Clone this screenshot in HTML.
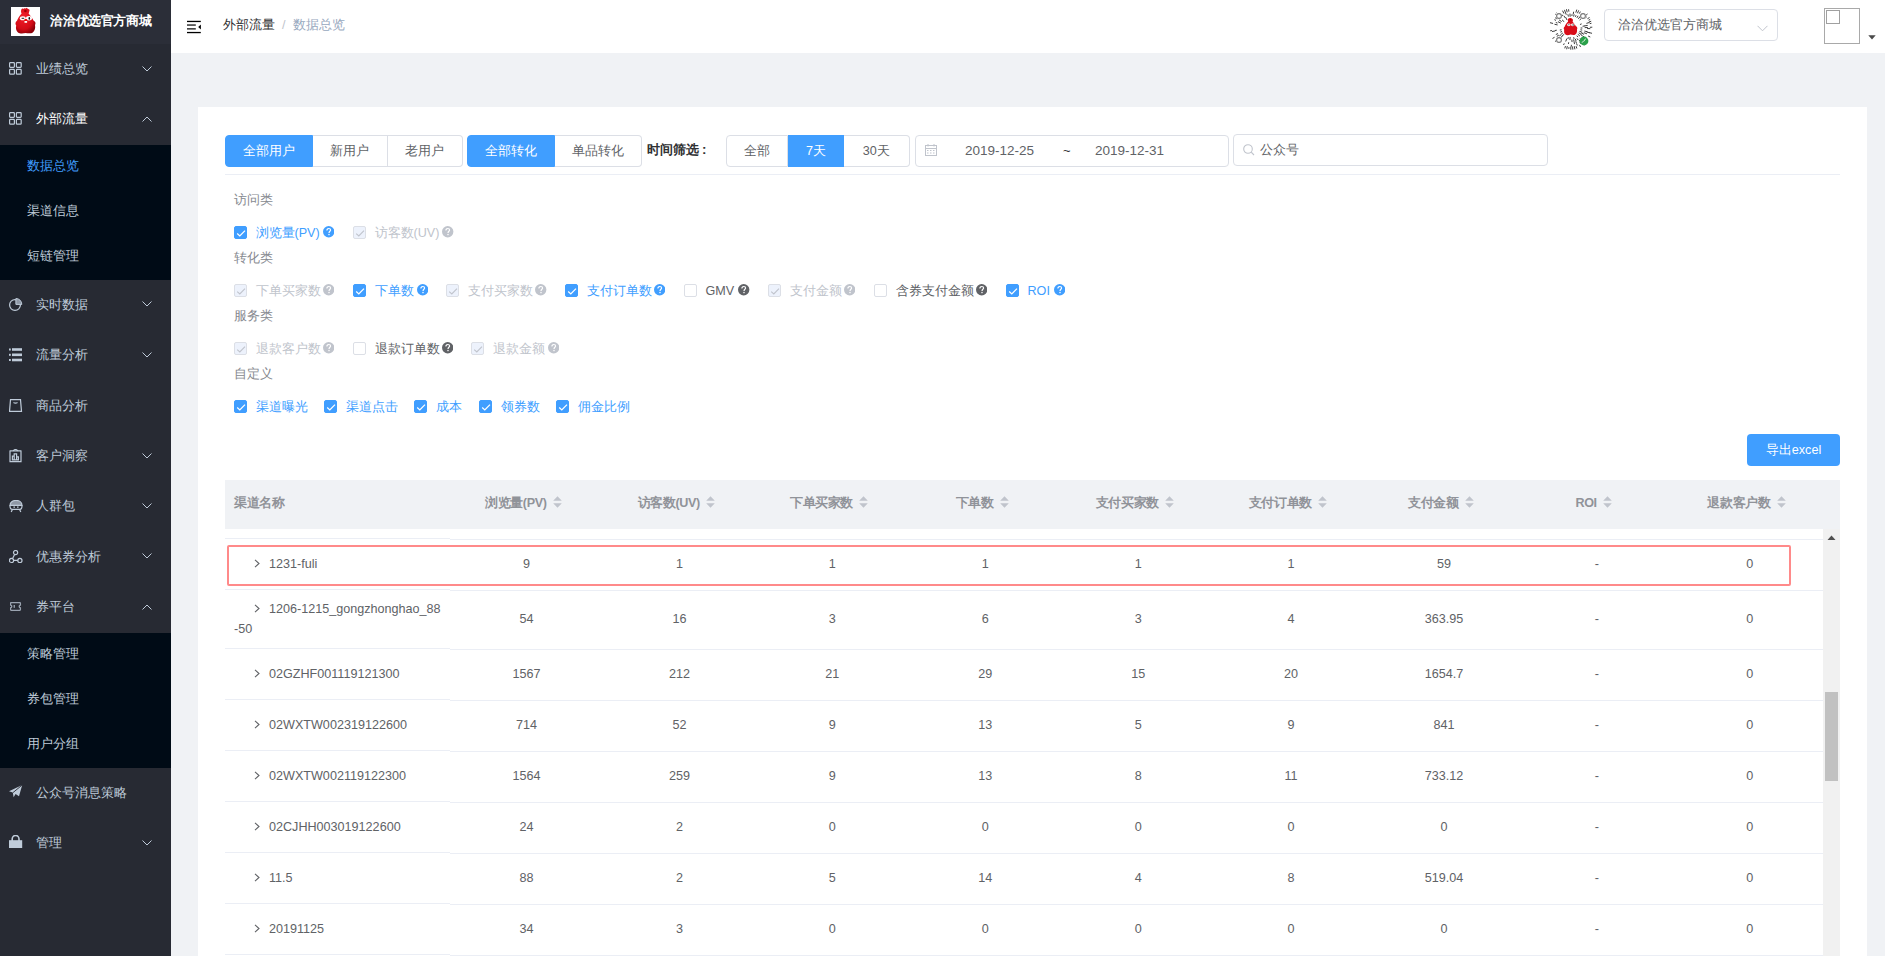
<!DOCTYPE html>
<html><head><meta charset="utf-8"><style>
*{box-sizing:border-box;margin:0;padding:0}
html,body{width:1885px;height:956px;overflow:hidden;background:#f0f2f5;font-family:"Liberation Sans",sans-serif;color:#606266;position:relative}
.a{position:absolute;white-space:nowrap}
#side{position:absolute;left:0;top:0;width:171px;height:956px;background:#272a33}
#logo{position:absolute;left:0;top:0;width:171px;height:44px;background:#2b2e38}
.mi{position:absolute;left:0;width:171px;height:50.4px;color:#bfcbd9;font-size:12.6px}
.mi .t{position:absolute;left:36px;top:0;line-height:50.4px;white-space:nowrap}
.mi svg{position:absolute}
.sub{position:absolute;left:0;width:171px;background:#000b16}
.si{position:absolute;left:27px;height:45px;line-height:43.8px;font-size:12.6px;color:#bfcbd9;white-space:nowrap}
#hdr{position:absolute;left:171px;top:0;width:1714px;height:53px;background:#fff}
#card{position:absolute;left:198px;top:107px;width:1669px;height:860px;background:#fff}
.btn{position:absolute;top:135px;height:32px;line-height:31.6px;font-size:12.6px;text-align:center;color:#606266;background:#fff;border:1px solid #dcdfe6;white-space:nowrap}
.btn.on{background:#409eff;border-color:#409eff;color:#fff}
.inp{position:absolute;height:32px;border:1px solid #dcdfe6;border-radius:4px;background:#fff}
.sec{position:absolute;left:234px;font-size:12.6px;color:#86898f;line-height:16px;white-space:nowrap}
.cb{position:absolute;width:12.6px;height:12.6px;border:1px solid #dcdfe6;border-radius:2px;background:#fff}
.cb.on{background:#409eff;border-color:#409eff}
.cb.dis{background:#edf2fc;border-color:#dcdfe6}
.lb{position:absolute;font-size:12.6px;line-height:16px;white-space:nowrap;color:#606266}
.lb.on{color:#409eff}.lb.dis{color:#c0c4cc}
.hp{display:inline-block;width:11.5px;height:11.5px;border-radius:50%;background:#606266;color:#fff;font-size:9px;font-weight:bold;line-height:11.5px;text-align:center;vertical-align:-1px;margin-left:4px}
.lb.on .hp{background:#409eff}.lb.dis .hp{background:#c0c4cc}
.th{position:absolute;top:479px;height:49px;line-height:49px;font-size:12.6px;font-weight:bold;color:#909399;text-align:center;white-space:nowrap}
.row{position:absolute;left:225px;width:1598px;border-bottom:1px solid #ebeef5;background:#fff}
.td{position:absolute;font-size:12.6px;color:#606266;text-align:center;white-space:nowrap}
</style></head><body>
<div id="side"><div id="logo"></div>
<svg class="a" style="left:11px;top:7px" width="29" height="29" viewBox="0 0 29 29">
<rect width="29" height="29" fill="#fff"/>
<defs><radialGradient id="rg" cx="0.4" cy="0.35" r="0.7"><stop offset="0" stop-color="#f2202a"/><stop offset="0.7" stop-color="#d40b16"/><stop offset="1" stop-color="#8a0008"/></radialGradient></defs>
<path d="M10.6 6.6 C9.6 4.6 9.8 2.4 11.4 1.2 C11.9 2.3 12.6 2.2 13.1 0.9 C13.9 1.9 15 1.6 15.8 0.7 C16.3 1.9 18.3 1.8 18.7 3.1 C18.1 3.9 18.3 5.5 17.6 6.6 C19.6 9 21 11 22.5 13.5 C24.5 14.5 25 16.5 24 18 C24.6 21 23.8 24 21.8 25.4 C19.8 26.8 17 26.3 14.6 26 C12 26.4 9 26.8 7 25.4 C5 24 4.6 21 5.2 18.5 C4 17 4.3 14.8 6 13.8 C7 11 9 8.6 10.6 6.6 Z" fill="url(#rg)"/>
<ellipse cx="11.8" cy="11.2" rx="3" ry="2" fill="#fff"/><ellipse cx="18" cy="11.2" rx="3" ry="2.2" fill="#fff"/>
<rect x="10.6" y="10.8" width="2.6" height="1" fill="#222"/><ellipse cx="18.3" cy="11.4" rx="0.8" ry="1.4" fill="#111"/>
<ellipse cx="14.8" cy="13" rx="1.6" ry="0.9" fill="#e00"/><rect x="13.5" y="14" width="2.6" height="1.8" fill="#fff"/>
<circle cx="14.4" cy="4" r="1.3" fill="#9b0008"/>
</svg>
<div class="a" style="left:50.4px;top:13.2px;line-height:16px;font-size:13px;letter-spacing:-0.4px;font-weight:bold;color:#fff">洽洽优选官方商城</div>
<div class="a" style="left:36px;top:44.0px;line-height:50.4px;font-size:12.6px;color:#bfcbd9">业绩总览</div>
<svg class="a" style="left:9px;top:62.0px" width="14" height="14" viewBox="0 0 14 14" fill="none" stroke="#bfcbd9" stroke-width="1.2"><rect x="0.6" y="0.6" width="4.8" height="4.8" rx="0.8"/><rect x="7.4" y="0.6" width="4.8" height="4.8" rx="0.8"/><rect x="0.6" y="7.4" width="4.8" height="4.8" rx="0.8"/><rect x="7.4" y="7.4" width="4.8" height="4.8" rx="0.8"/></svg>
<svg class="a" style="left:142px;top:65.5px" width="10" height="6" viewBox="0 0 10 6"><path d="M0.5 0.5 L5 5 L9.5 0.5" fill="none" stroke="#bfcbd9" stroke-width="1"/></svg>
<div class="a" style="left:36px;top:94.4px;line-height:50.4px;font-size:12.6px;color:#fff">外部流量</div>
<svg class="a" style="left:9px;top:112.4px" width="14" height="14" viewBox="0 0 14 14" fill="none" stroke="#bfcbd9" stroke-width="1.2"><rect x="0.6" y="0.6" width="4.8" height="4.8" rx="0.8"/><rect x="7.4" y="0.6" width="4.8" height="4.8" rx="0.8"/><rect x="0.6" y="7.4" width="4.8" height="4.8" rx="0.8"/><rect x="7.4" y="7.4" width="4.8" height="4.8" rx="0.8"/></svg>
<svg class="a" style="left:142px;top:115.9px" width="10" height="6" viewBox="0 0 10 6"><path d="M0.5 5.5 L5 1 L9.5 5.5" fill="none" stroke="#bfcbd9" stroke-width="1"/></svg>
<div class="a" style="left:36px;top:279.8px;line-height:50.4px;font-size:12.6px;color:#bfcbd9">实时数据</div>
<svg class="a" style="left:9px;top:298.3px" width="14" height="14" viewBox="0 0 14 14" fill="none" stroke="#bfcbd9" stroke-width="1.2"><circle cx="6" cy="7" r="5.4"/><path d="M6.9 0.5 A5.9 5.9 0 0 1 12.8 6.4 L6.9 6.4 Z" fill="#8f98a6" stroke="#bfcbd9" stroke-width="1"/></svg>
<svg class="a" style="left:142px;top:301.3px" width="10" height="6" viewBox="0 0 10 6"><path d="M0.5 0.5 L5 5 L9.5 0.5" fill="none" stroke="#bfcbd9" stroke-width="1"/></svg>
<div class="a" style="left:36px;top:330.2px;line-height:50.4px;font-size:12.6px;color:#bfcbd9">流量分析</div>
<svg class="a" style="left:9px;top:347.8px" width="14" height="14" viewBox="0 0 14 14" fill="none" stroke="#bfcbd9" stroke-width="1.2"><g fill="#bfcbd9" stroke="none"><rect x="0" y="0.5" width="1.8" height="2"/><rect x="0" y="5.8" width="1.8" height="2"/><rect x="0" y="11" width="1.8" height="2"/><rect x="3" y="0.2" width="10" height="2.6"/><rect x="3" y="5.5" width="10" height="2.6"/><rect x="3" y="10.7" width="10" height="2.6"/></g></svg>
<svg class="a" style="left:142px;top:351.7px" width="10" height="6" viewBox="0 0 10 6"><path d="M0.5 0.5 L5 5 L9.5 0.5" fill="none" stroke="#bfcbd9" stroke-width="1"/></svg>
<div class="a" style="left:36px;top:380.6px;line-height:50.4px;font-size:12.6px;color:#bfcbd9">商品分析</div>
<svg class="a" style="left:9px;top:399.0px" width="14" height="14" viewBox="0 0 14 14" fill="none" stroke="#bfcbd9" stroke-width="1.2"><path d="M1.5 0.6 L11.5 0.6 L12.5 12.4 L0.5 12.4 Z"/><path d="M4.5 3.6 Q6.5 4.8 8.5 3.6"/></svg>
<div class="a" style="left:36px;top:431.0px;line-height:50.4px;font-size:12.6px;color:#bfcbd9">客户洞察</div>
<svg class="a" style="left:9px;top:449.4px" width="14" height="14" viewBox="0 0 14 14" fill="none" stroke="#bfcbd9" stroke-width="1.2"><path d="M0.6 1.8 H12.4 M1 1.8 V12.6 H12 V1.8"/><path d="M4 1.8 L6.5 0.2 L9 1.8"/><path d="M3.4 10.6 V7.2 H5.2 V10.6 M5.2 10.6 V4.8 H7.6 V10.6 M7.6 10.6 V7.8 H9.4 V10.6 M2.8 10.8 H10"/></svg>
<svg class="a" style="left:142px;top:452.5px" width="10" height="6" viewBox="0 0 10 6"><path d="M0.5 0.5 L5 5 L9.5 0.5" fill="none" stroke="#bfcbd9" stroke-width="1"/></svg>
<div class="a" style="left:36px;top:481.4px;line-height:50.4px;font-size:12.6px;color:#bfcbd9">人群包</div>
<svg class="a" style="left:8.5px;top:499.6px" width="14" height="14" viewBox="0 0 14 14" fill="none" stroke="#bfcbd9" stroke-width="1.2"><path d="M1 5.4 C1 2.2 3.8 0.4 7 0.4 C10.2 0.4 13 2.2 13 5.4 Z" fill="#8f98a6" stroke="#bfcbd9"/><path d="M1 5.4 C0.8 8 1.8 9.4 3.2 9.4 L10.8 9.4 C12.2 9.4 13.2 8 13 5.4"/><path d="M4.4 7.2 H6 M8 7.2 H9.6"/><path d="M3.4 9.4 L2.2 12 M10.6 9.4 L11.8 12"/></svg>
<svg class="a" style="left:142px;top:502.9px" width="10" height="6" viewBox="0 0 10 6"><path d="M0.5 0.5 L5 5 L9.5 0.5" fill="none" stroke="#bfcbd9" stroke-width="1"/></svg>
<div class="a" style="left:36px;top:531.8px;line-height:50.4px;font-size:12.6px;color:#bfcbd9">优惠券分析</div>
<svg class="a" style="left:9px;top:550.2px" width="14" height="14" viewBox="0 0 14 14" fill="none" stroke="#bfcbd9" stroke-width="1.2"><circle cx="6.6" cy="2.6" r="2.1"/><circle cx="2.5" cy="10.4" r="2.1"/><circle cx="10.9" cy="10.4" r="2.1"/><path d="M5.6 4.5 L3.6 8.5 M4.6 10.4 H8.8"/></svg>
<svg class="a" style="left:142px;top:553.3px" width="10" height="6" viewBox="0 0 10 6"><path d="M0.5 0.5 L5 5 L9.5 0.5" fill="none" stroke="#bfcbd9" stroke-width="1"/></svg>
<div class="a" style="left:36px;top:582.2px;line-height:50.4px;font-size:12.6px;color:#bfcbd9">券平台</div>
<svg class="a" style="left:10px;top:602.2px" width="14" height="14" viewBox="0 0 14 14" fill="none" stroke="#bfcbd9" stroke-width="1.2"><path d="M1.2 0.6 H9.8 Q10.4 0.6 10.4 1.2 V3.0 C9.6 3.2 9.2 3.8 9.2 4.4 C9.2 5 9.6 5.6 10.4 5.8 V7.6 Q10.4 8.4 9.8 8.4 H1.2 Q0.6 8.4 0.6 7.6 V5.8 C1.4 5.6 1.8 5 1.8 4.4 C1.8 3.8 1.4 3.2 0.6 3.0 V1.2 Q0.6 0.6 1.2 0.6 Z" stroke="#9aa3b0" stroke-width="1.3"/><path d="M4.2 3.0 V5.8" stroke-width="1"/></svg>
<svg class="a" style="left:142px;top:603.7px" width="10" height="6" viewBox="0 0 10 6"><path d="M0.5 5.5 L5 1 L9.5 5.5" fill="none" stroke="#bfcbd9" stroke-width="1"/></svg>
<div class="a" style="left:36px;top:767.6px;line-height:50.4px;font-size:12.6px;color:#bfcbd9">公众号消息策略</div>
<svg class="a" style="left:9px;top:785.0px" width="14" height="14" viewBox="0 0 14 14" fill="none" stroke="#bfcbd9" stroke-width="1.2"><path d="M13.2 0 L0 6.2 L3.8 7.4 L4.6 12.2 L6.6 9 L10 11.2 Z" fill="#bfcbd9" stroke="none"/><path d="M13.2 0 L4 7.6" stroke="#272a33" stroke-width="0.9"/></svg>
<div class="a" style="left:36px;top:818.0px;line-height:50.4px;font-size:12.6px;color:#bfcbd9">管理</div>
<svg class="a" style="left:9px;top:835.4px" width="14" height="14" viewBox="0 0 14 14" fill="none" stroke="#bfcbd9" stroke-width="1.2"><path d="M3.2 6 V4 A3.4 3.6 0 0 1 10 4 V6" stroke-width="1.6"/><rect x="0" y="5.2" width="13.2" height="7.8" fill="#bfcbd9" stroke="none"/></svg>
<svg class="a" style="left:142px;top:839.5px" width="10" height="6" viewBox="0 0 10 6"><path d="M0.5 0.5 L5 5 L9.5 0.5" fill="none" stroke="#bfcbd9" stroke-width="1"/></svg>
<div class="sub" style="top:144.8px;height:135px">
<div class="si" style="top:0px;color:#409eff">数据总览</div>
<div class="si" style="top:45px;color:#bfcbd9">渠道信息</div>
<div class="si" style="top:90px;color:#bfcbd9">短链管理</div>
</div>
<div class="sub" style="top:632.6px;height:135px">
<div class="si" style="top:0px;color:#bfcbd9">策略管理</div>
<div class="si" style="top:45px;color:#bfcbd9">券包管理</div>
<div class="si" style="top:90px;color:#bfcbd9">用户分组</div>
</div>
</div>
<div id="hdr"></div>
<svg class="a" style="left:187px;top:20px" width="14" height="14" viewBox="0 0 14 14">
<rect x="0" y="0.8" width="13.8" height="1.3" fill="#000"/>
<rect x="0" y="4.3" width="8.8" height="1.5" fill="#333"/>
<rect x="0" y="8.1" width="8.8" height="1.5" fill="#333"/>
<rect x="0" y="11.9" width="13.8" height="1.3" fill="#000"/>
<path d="M11.2 6.95 L13.9 4.5 L13.9 9.4 Z" fill="#000"/></svg>
<div class="a" style="left:223px;top:17px;line-height:17px;font-size:12.6px;color:#303133">外部流量</div>
<div class="a" style="left:282px;top:17px;line-height:17px;font-size:12.6px;color:#c0c4cc">/</div>
<div class="a" style="left:293px;top:17px;line-height:17px;font-size:12.6px;color:#97a8be">数据总览</div>
<svg class="a" style="left:1549px;top:6px" width="44" height="44" viewBox="0 0 44 44"><line x1="32.00" y1="22.00" x2="33.00" y2="22.00" stroke="#333" stroke-width="0.95" stroke-linecap="round"/><line x1="31.83" y1="23.84" x2="32.81" y2="24.02" stroke="#333" stroke-width="0.95" stroke-linecap="round"/><line x1="30.67" y1="25.36" x2="32.91" y2="26.23" stroke="#333" stroke-width="0.95" stroke-linecap="round"/><line x1="29.91" y1="26.90" x2="31.95" y2="28.16" stroke="#333" stroke-width="0.95" stroke-linecap="round"/><line x1="28.87" y1="28.27" x2="30.65" y2="29.88" stroke="#333" stroke-width="0.95" stroke-linecap="round"/><line x1="28.03" y1="29.98" x2="28.63" y2="30.78" stroke="#333" stroke-width="0.95" stroke-linecap="round"/><line x1="24.74" y1="31.62" x2="25.01" y2="32.58" stroke="#333" stroke-width="0.95" stroke-linecap="round"/><line x1="21.14" y1="31.26" x2="20.92" y2="33.65" stroke="#333" stroke-width="0.95" stroke-linecap="round"/><line x1="19.26" y1="31.62" x2="18.99" y2="32.58" stroke="#333" stroke-width="0.95" stroke-linecap="round"/><line x1="15.13" y1="28.27" x2="13.35" y2="29.88" stroke="#333" stroke-width="0.95" stroke-linecap="round"/><line x1="13.50" y1="27.26" x2="12.65" y2="27.79" stroke="#333" stroke-width="0.95" stroke-linecap="round"/><line x1="12.68" y1="25.61" x2="11.74" y2="25.97" stroke="#333" stroke-width="0.95" stroke-linecap="round"/><line x1="12.17" y1="23.84" x2="11.19" y2="24.02" stroke="#333" stroke-width="0.95" stroke-linecap="round"/><line x1="15.13" y1="15.73" x2="13.35" y2="14.12" stroke="#333" stroke-width="0.95" stroke-linecap="round"/><line x1="17.85" y1="13.67" x2="16.78" y2="11.53" stroke="#333" stroke-width="0.95" stroke-linecap="round"/><line x1="31.32" y1="18.39" x2="32.26" y2="18.03" stroke="#333" stroke-width="0.95" stroke-linecap="round"/><line x1="32.54" y1="27.08" x2="34.70" y2="28.13" stroke="#333" stroke-width="0.95" stroke-linecap="round"/><line x1="31.99" y1="28.82" x2="33.31" y2="29.73" stroke="#333" stroke-width="0.95" stroke-linecap="round"/><line x1="28.19" y1="32.74" x2="28.69" y2="33.61" stroke="#333" stroke-width="0.95" stroke-linecap="round"/><line x1="26.41" y1="33.27" x2="26.99" y2="34.76" stroke="#333" stroke-width="0.95" stroke-linecap="round"/><line x1="24.68" y1="33.80" x2="25.04" y2="35.36" stroke="#333" stroke-width="0.95" stroke-linecap="round"/><line x1="22.89" y1="34.07" x2="23.01" y2="35.66" stroke="#333" stroke-width="0.95" stroke-linecap="round"/><line x1="17.72" y1="32.89" x2="16.84" y2="35.12" stroke="#333" stroke-width="0.95" stroke-linecap="round"/><line x1="13.42" y1="29.95" x2="11.66" y2="31.58" stroke="#333" stroke-width="0.95" stroke-linecap="round"/><line x1="12.00" y1="28.81" x2="10.67" y2="29.71" stroke="#333" stroke-width="0.95" stroke-linecap="round"/><line x1="11.46" y1="16.92" x2="9.30" y2="15.87" stroke="#333" stroke-width="0.95" stroke-linecap="round"/><line x1="12.34" y1="15.40" x2="10.36" y2="14.05" stroke="#333" stroke-width="0.95" stroke-linecap="round"/><line x1="15.96" y1="11.52" x2="15.16" y2="10.13" stroke="#333" stroke-width="0.95" stroke-linecap="round"/><line x1="19.32" y1="10.20" x2="18.96" y2="8.64" stroke="#333" stroke-width="0.95" stroke-linecap="round"/><line x1="21.14" y1="10.33" x2="20.96" y2="7.94" stroke="#333" stroke-width="0.95" stroke-linecap="round"/><line x1="22.94" y1="9.64" x2="23.01" y2="8.64" stroke="#333" stroke-width="0.95" stroke-linecap="round"/><line x1="24.70" y1="10.21" x2="25.06" y2="8.65" stroke="#333" stroke-width="0.95" stroke-linecap="round"/><line x1="26.54" y1="10.46" x2="26.91" y2="9.53" stroke="#333" stroke-width="0.95" stroke-linecap="round"/><line x1="28.06" y1="11.53" x2="28.86" y2="10.14" stroke="#333" stroke-width="0.95" stroke-linecap="round"/><line x1="29.55" y1="12.55" x2="30.55" y2="11.30" stroke="#333" stroke-width="0.95" stroke-linecap="round"/><line x1="30.88" y1="13.78" x2="32.05" y2="12.69" stroke="#333" stroke-width="0.95" stroke-linecap="round"/><line x1="33.97" y1="20.21" x2="35.55" y2="19.97" stroke="#333" stroke-width="0.95" stroke-linecap="round"/><line x1="34.21" y1="30.36" x2="35.04" y2="30.92" stroke="#333" stroke-width="0.95" stroke-linecap="round"/><line x1="33.07" y1="31.82" x2="33.82" y2="32.49" stroke="#333" stroke-width="0.95" stroke-linecap="round"/><line x1="31.29" y1="32.61" x2="32.87" y2="34.41" stroke="#333" stroke-width="0.95" stroke-linecap="round"/><line x1="30.11" y1="34.02" x2="31.01" y2="35.34" stroke="#333" stroke-width="0.95" stroke-linecap="round"/><line x1="26.87" y1="35.66" x2="27.41" y2="37.16" stroke="#333" stroke-width="0.95" stroke-linecap="round"/><line x1="25.12" y1="36.16" x2="25.46" y2="37.72" stroke="#333" stroke-width="0.95" stroke-linecap="round"/><line x1="19.64" y1="36.61" x2="19.48" y2="37.60" stroke="#333" stroke-width="0.95" stroke-linecap="round"/><line x1="12.00" y1="31.94" x2="10.30" y2="33.63" stroke="#333" stroke-width="0.95" stroke-linecap="round"/><line x1="9.50" y1="29.34" x2="8.12" y2="30.15" stroke="#333" stroke-width="0.95" stroke-linecap="round"/><line x1="8.67" y1="27.72" x2="7.20" y2="28.35" stroke="#333" stroke-width="0.95" stroke-linecap="round"/><line x1="7.38" y1="24.27" x2="6.39" y2="24.42" stroke="#333" stroke-width="0.95" stroke-linecap="round"/><line x1="8.25" y1="18.88" x2="5.91" y2="18.35" stroke="#333" stroke-width="0.95" stroke-linecap="round"/><line x1="8.09" y1="16.94" x2="7.15" y2="16.60" stroke="#333" stroke-width="0.95" stroke-linecap="round"/><line x1="13.72" y1="9.73" x2="13.16" y2="8.90" stroke="#333" stroke-width="0.95" stroke-linecap="round"/><line x1="17.13" y1="8.34" x2="16.59" y2="6.84" stroke="#333" stroke-width="0.95" stroke-linecap="round"/><line x1="24.31" y1="7.69" x2="24.57" y2="6.11" stroke="#333" stroke-width="0.95" stroke-linecap="round"/><line x1="31.11" y1="10.33" x2="31.72" y2="9.55" stroke="#333" stroke-width="0.95" stroke-linecap="round"/><line x1="35.93" y1="19.84" x2="38.30" y2="19.47" stroke="#333" stroke-width="0.95" stroke-linecap="round"/><line x1="36.09" y1="21.60" x2="38.49" y2="21.53" stroke="#333" stroke-width="0.95" stroke-linecap="round"/><line x1="35.75" y1="25.12" x2="38.09" y2="25.65" stroke="#333" stroke-width="0.95" stroke-linecap="round"/><line x1="35.25" y1="26.82" x2="37.51" y2="27.64" stroke="#333" stroke-width="0.95" stroke-linecap="round"/><line x1="31.01" y1="36.30" x2="31.87" y2="37.65" stroke="#333" stroke-width="0.95" stroke-linecap="round"/><line x1="27.83" y1="38.18" x2="28.17" y2="39.12" stroke="#333" stroke-width="0.95" stroke-linecap="round"/><line x1="22.36" y1="39.20" x2="22.38" y2="40.20" stroke="#333" stroke-width="0.95" stroke-linecap="round"/><line x1="15.10" y1="37.76" x2="14.70" y2="38.67" stroke="#333" stroke-width="0.95" stroke-linecap="round"/><line x1="10.90" y1="34.21" x2="9.29" y2="35.99" stroke="#333" stroke-width="0.95" stroke-linecap="round"/><line x1="5.78" y1="25.01" x2="3.42" y2="25.45" stroke="#333" stroke-width="0.95" stroke-linecap="round"/><line x1="6.64" y1="14.26" x2="5.75" y2="13.81" stroke="#333" stroke-width="0.95" stroke-linecap="round"/><line x1="7.82" y1="12.81" x2="6.48" y2="11.94" stroke="#333" stroke-width="0.95" stroke-linecap="round"/><line x1="8.66" y1="11.14" x2="7.89" y2="10.51" stroke="#333" stroke-width="0.95" stroke-linecap="round"/><line x1="14.76" y1="7.17" x2="13.71" y2="5.02" stroke="#333" stroke-width="0.95" stroke-linecap="round"/><line x1="16.41" y1="6.48" x2="15.59" y2="4.22" stroke="#333" stroke-width="0.95" stroke-linecap="round"/><line x1="18.12" y1="5.96" x2="17.55" y2="3.63" stroke="#333" stroke-width="0.95" stroke-linecap="round"/><line x1="19.82" y1="5.24" x2="19.62" y2="3.65" stroke="#333" stroke-width="0.95" stroke-linecap="round"/><line x1="26.94" y1="6.26" x2="27.66" y2="3.97" stroke="#333" stroke-width="0.95" stroke-linecap="round"/><line x1="28.62" y1="6.88" x2="29.58" y2="4.69" stroke="#333" stroke-width="0.95" stroke-linecap="round"/><line x1="30.41" y1="7.34" x2="31.21" y2="5.95" stroke="#333" stroke-width="0.95" stroke-linecap="round"/><line x1="33.57" y1="9.27" x2="34.24" y2="8.53" stroke="#333" stroke-width="0.95" stroke-linecap="round"/><line x1="34.87" y1="10.59" x2="35.62" y2="9.93" stroke="#333" stroke-width="0.95" stroke-linecap="round"/><line x1="35.46" y1="12.46" x2="37.42" y2="11.07" stroke="#333" stroke-width="0.95" stroke-linecap="round"/><line x1="37.80" y1="17.26" x2="40.10" y2="16.57" stroke="#333" stroke-width="0.95" stroke-linecap="round"/><line x1="38.49" y1="22.55" x2="40.89" y2="22.63" stroke="#333" stroke-width="0.95" stroke-linecap="round"/><line x1="37.99" y1="26.08" x2="40.31" y2="26.68" stroke="#333" stroke-width="0.95" stroke-linecap="round"/><line x1="27.25" y1="40.57" x2="27.69" y2="42.11" stroke="#333" stroke-width="0.95" stroke-linecap="round"/><line x1="25.39" y1="40.59" x2="25.82" y2="42.95" stroke="#333" stroke-width="0.95" stroke-linecap="round"/><line x1="23.61" y1="40.83" x2="23.81" y2="43.22" stroke="#333" stroke-width="0.95" stroke-linecap="round"/><line x1="21.81" y1="40.90" x2="21.79" y2="43.30" stroke="#333" stroke-width="0.95" stroke-linecap="round"/><line x1="19.94" y1="41.49" x2="19.84" y2="42.49" stroke="#333" stroke-width="0.95" stroke-linecap="round"/><line x1="18.24" y1="40.52" x2="17.76" y2="42.87" stroke="#333" stroke-width="0.95" stroke-linecap="round"/><line x1="16.38" y1="40.46" x2="15.91" y2="41.99" stroke="#333" stroke-width="0.95" stroke-linecap="round"/><line x1="7.06" y1="34.69" x2="6.30" y2="35.33" stroke="#333" stroke-width="0.95" stroke-linecap="round"/><line x1="5.19" y1="31.48" x2="3.80" y2="32.27" stroke="#333" stroke-width="0.95" stroke-linecap="round"/><line x1="2.57" y1="24.60" x2="1.58" y2="24.73" stroke="#333" stroke-width="0.95" stroke-linecap="round"/><line x1="3.68" y1="17.36" x2="1.35" y2="16.77" stroke="#333" stroke-width="0.95" stroke-linecap="round"/><line x1="7.32" y1="9.02" x2="6.57" y2="8.35" stroke="#333" stroke-width="0.95" stroke-linecap="round"/><line x1="8.62" y1="7.68" x2="7.93" y2="6.95" stroke="#333" stroke-width="0.95" stroke-linecap="round"/><line x1="36.41" y1="9.77" x2="38.24" y2="8.21" stroke="#333" stroke-width="0.95" stroke-linecap="round"/><line x1="38.81" y1="12.52" x2="40.20" y2="11.73" stroke="#333" stroke-width="0.95" stroke-linecap="round"/><line x1="39.91" y1="14.04" x2="40.82" y2="13.63" stroke="#333" stroke-width="0.95" stroke-linecap="round"/><line x1="40.30" y1="15.87" x2="41.82" y2="15.36" stroke="#333" stroke-width="0.95" stroke-linecap="round"/><line x1="41.09" y1="17.57" x2="42.07" y2="17.34" stroke="#333" stroke-width="0.95" stroke-linecap="round"/><line x1="41.29" y1="21.27" x2="42.89" y2="21.21" stroke="#333" stroke-width="0.95" stroke-linecap="round"/><line x1="40.32" y1="26.64" x2="42.65" y2="27.23" stroke="#333" stroke-width="0.95" stroke-linecap="round"/><line x1="39.47" y1="30.19" x2="40.92" y2="30.87" stroke="#333" stroke-width="0.95" stroke-linecap="round"/><line x1="36.68" y1="34.98" x2="37.43" y2="35.65" stroke="#333" stroke-width="0.95" stroke-linecap="round"/><line x1="35.18" y1="36.10" x2="36.27" y2="37.27" stroke="#333" stroke-width="0.95" stroke-linecap="round"/><line x1="33.53" y1="36.97" x2="35.00" y2="38.87" stroke="#333" stroke-width="0.95" stroke-linecap="round"/><line x1="30.67" y1="39.24" x2="31.39" y2="40.67" stroke="#333" stroke-width="0.95" stroke-linecap="round"/><circle cx="10" cy="10" r="3.2" fill="#fff"/><circle cx="10" cy="10" r="2.4" fill="none" stroke="#777" stroke-width="1.1"/><circle cx="34" cy="10" r="3.2" fill="#fff"/><circle cx="34" cy="10" r="2.4" fill="none" stroke="#777" stroke-width="1.1"/><circle cx="10" cy="34" r="3.2" fill="#fff"/><circle cx="10" cy="34" r="2.4" fill="none" stroke="#777" stroke-width="1.1"/><circle cx="22" cy="22" r="9" fill="#fff"/><g transform="translate(11.67 11.16) scale(0.68)"><path d="M11 2.5 C12.5 0.5 16 0.8 17.5 2.8 C18.5 4 18 5.5 17.5 6.5 C19.5 9 21 11 22.5 13.5 C24.5 14.5 25 16.5 24 18 C24.5 21 23.5 24 21.5 25.5 C19.5 27 16.5 26 14.5 25.5 C12 26.5 9 27 7 25.5 C5 24 4.8 21 5.2 18.5 C4 17 4.3 14.8 6 13.8 C7 11 9 8.5 11 6.5 C10.3 5 10.3 3.5 11 2.5 Z" fill="#d80c18"/><ellipse cx="12" cy="11.3" rx="2.6" ry="1.9" fill="#fff"/><ellipse cx="17.8" cy="11.3" rx="2.6" ry="2.1" fill="#fff"/><rect x="10.6" y="10.8" width="2.6" height="1" fill="#222"/><ellipse cx="18.3" cy="11.4" rx="0.8" ry="1.4" fill="#111"/><circle cx="14.6" cy="3.8" r="1.2" fill="#a00"/></g><circle cx="35" cy="35" r="4.4" fill="#2aa14a"/><path d="M33 36.8 q0.6 -1.6 1.5 -1.5 q1 0.1 1 -1.3 q0.4 -1.3 1.5 -1" stroke="#fff" stroke-width="0.7" fill="none"/></svg>
<div class="inp" style="left:1604px;top:9px;width:174px;height:32px"></div>
<div class="a" style="left:1618px;top:17px;line-height:16px;font-size:12.6px;color:#606266">洽洽优选官方商城</div>
<svg class="a" style="left:1757px;top:25px" width="11" height="7" viewBox="0 0 11 7"><path d="M0.5 0.8 L5.5 5.8 L10.5 0.8" fill="none" stroke="#c0c4cc" stroke-width="1"/></svg>
<div class="a" style="left:1824px;top:8px;width:36px;height:36px;border:1px solid #a9a9a9;background:#fff"></div>
<div class="a" style="left:1826px;top:10px;width:14px;height:14px;border:1px solid #a0a0a0;background:#fff"></div>
<svg class="a" style="left:1868px;top:34.5px" width="8" height="5" viewBox="0 0 8 5"><path d="M0.3 0.3 H7.7 L4 4.6 Z" fill="#4a4a4a"/></svg>
<div id="card"></div>
<div class="btn on" style="left:225px;width:88px;border-radius:4px 0 0 4px;">全部用户</div>
<div class="btn" style="left:313px;width:74.5px;border-left:none;">新用户</div>
<div class="btn" style="left:387.5px;width:75.0px;border-radius:0 4px 4px 0;border-left:none;">老用户</div>
<div class="btn on" style="left:467px;width:88px;border-radius:4px 0 0 4px;">全部转化</div>
<div class="btn" style="left:555px;width:87px;border-radius:0 4px 4px 0;border-left:none;">单品转化</div>
<div class="a" style="left:647.4px;top:142px;line-height:16px;font-size:13.4px;font-weight:bold;color:#303133">时间筛选<span style="margin-left:2.5px">:</span></div>
<div class="btn" style="left:725.8px;width:62.200000000000045px;border-radius:4px 0 0 4px;">全部</div>
<div class="btn on" style="left:788px;width:56px;">7天</div>
<div class="btn" style="left:844px;width:65.5px;border-radius:0 4px 4px 0;border-left:none;">30天</div>
<div class="inp" style="left:914.5px;top:135px;width:314px;height:32px"></div>
<svg class="a" style="left:925px;top:144px" width="12" height="12" viewBox="0 0 12 12" fill="none" stroke="#c0c4cc" stroke-width="1">
<rect x="0.5" y="1.5" width="11" height="10"/><path d="M0.5 4.5 H11.5 M3 0 V2.5 M9 0 V2.5"/><g fill="#c0c4cc" stroke="none"><rect x="2" y="6" width="1.5" height="1"/><rect x="5" y="6" width="1.5" height="1"/><rect x="8" y="6" width="1.5" height="1"/><rect x="2" y="8.5" width="1.5" height="1"/><rect x="5" y="8.5" width="1.5" height="1"/><rect x="8" y="8.5" width="1.5" height="1"/></g></svg>
<div class="a" style="left:965px;top:143px;line-height:16px;font-size:13.5px;color:#606266">2019-12-25</div>
<div class="a" style="left:1063px;top:143px;line-height:16px;font-size:13px;color:#303133">~</div>
<div class="a" style="left:1095px;top:143px;line-height:16px;font-size:13.5px;color:#606266">2019-12-31</div>
<div class="inp" style="left:1233px;top:134px;width:315px;height:32px"></div>
<svg class="a" style="left:1243px;top:144px" width="12" height="12" viewBox="0 0 12 12" fill="none" stroke="#c0c4cc" stroke-width="1.1"><circle cx="5" cy="5" r="4.3"/><path d="M8.2 8.2 L11 11"/></svg>
<div class="a" style="left:1260px;top:142px;line-height:16px;font-size:12.6px;color:#606266">公众号</div>
<div class="a" style="left:225px;top:174px;width:1615px;height:1px;background:#ebeef5"></div>
<div class="sec" style="top:192px">访问类</div>
<div class="sec" style="top:250px">转化类</div>
<div class="sec" style="top:308px">服务类</div>
<div class="sec" style="top:366px">自定义</div>
<div class="cb on" style="left:234px;top:226.2px"><svg class="a" style="left:0;top:0" width="12.6" height="12.6" viewBox="0 0 12.6 12.6"><path d="M2.2 6.6 L4.8 8.9 L10 3.6" fill="none" stroke="#fff" stroke-width="1.3"/></svg></div>
<div class="lb on" style="left:255.5px;top:224.5px">浏览量(PV)</div>
<svg class="a" style="left:323px;top:226.3px" width="11.4" height="11.4" viewBox="0 0 11.4 11.4"><circle cx="5.7" cy="5.7" r="5.7" fill="#409eff"/><path d="M3.9 4.5 C3.9 3.2 4.8 2.5 5.8 2.5 C6.8 2.5 7.6 3.2 7.6 4.1 C7.6 5.2 6 5.4 6 6.9" fill="none" stroke="#fff" stroke-width="1.15"/><rect x="5.35" y="7.9" width="1.3" height="1.3" fill="#fff"/></svg>
<div class="cb dis" style="left:353px;top:226.2px"><svg class="a" style="left:0;top:0" width="12.6" height="12.6" viewBox="0 0 12.6 12.6"><path d="M2.2 6.6 L4.8 8.9 L10 3.6" fill="none" stroke="#c0c4cc" stroke-width="1.1"/></svg></div>
<div class="lb dis" style="left:374.5px;top:224.5px">访客数(UV)</div>
<svg class="a" style="left:442.2px;top:226.3px" width="11.4" height="11.4" viewBox="0 0 11.4 11.4"><circle cx="5.7" cy="5.7" r="5.7" fill="#c0c4cc"/><path d="M3.9 4.5 C3.9 3.2 4.8 2.5 5.8 2.5 C6.8 2.5 7.6 3.2 7.6 4.1 C7.6 5.2 6 5.4 6 6.9" fill="none" stroke="#fff" stroke-width="1.15"/><rect x="5.35" y="7.9" width="1.3" height="1.3" fill="#fff"/></svg>
<div class="cb dis" style="left:234px;top:284.2px"><svg class="a" style="left:0;top:0" width="12.6" height="12.6" viewBox="0 0 12.6 12.6"><path d="M2.2 6.6 L4.8 8.9 L10 3.6" fill="none" stroke="#c0c4cc" stroke-width="1.1"/></svg></div>
<div class="lb dis" style="left:255.5px;top:282.5px">下单买家数</div>
<svg class="a" style="left:322.8px;top:284.3px" width="11.4" height="11.4" viewBox="0 0 11.4 11.4"><circle cx="5.7" cy="5.7" r="5.7" fill="#c0c4cc"/><path d="M3.9 4.5 C3.9 3.2 4.8 2.5 5.8 2.5 C6.8 2.5 7.6 3.2 7.6 4.1 C7.6 5.2 6 5.4 6 6.9" fill="none" stroke="#fff" stroke-width="1.15"/><rect x="5.35" y="7.9" width="1.3" height="1.3" fill="#fff"/></svg>
<div class="cb on" style="left:353px;top:284.2px"><svg class="a" style="left:0;top:0" width="12.6" height="12.6" viewBox="0 0 12.6 12.6"><path d="M2.2 6.6 L4.8 8.9 L10 3.6" fill="none" stroke="#fff" stroke-width="1.3"/></svg></div>
<div class="lb on" style="left:374.5px;top:282.5px">下单数</div>
<svg class="a" style="left:416.6px;top:284.3px" width="11.4" height="11.4" viewBox="0 0 11.4 11.4"><circle cx="5.7" cy="5.7" r="5.7" fill="#409eff"/><path d="M3.9 4.5 C3.9 3.2 4.8 2.5 5.8 2.5 C6.8 2.5 7.6 3.2 7.6 4.1 C7.6 5.2 6 5.4 6 6.9" fill="none" stroke="#fff" stroke-width="1.15"/><rect x="5.35" y="7.9" width="1.3" height="1.3" fill="#fff"/></svg>
<div class="cb dis" style="left:446.4px;top:284.2px"><svg class="a" style="left:0;top:0" width="12.6" height="12.6" viewBox="0 0 12.6 12.6"><path d="M2.2 6.6 L4.8 8.9 L10 3.6" fill="none" stroke="#c0c4cc" stroke-width="1.1"/></svg></div>
<div class="lb dis" style="left:467.9px;top:282.5px">支付买家数</div>
<svg class="a" style="left:535.3px;top:284.3px" width="11.4" height="11.4" viewBox="0 0 11.4 11.4"><circle cx="5.7" cy="5.7" r="5.7" fill="#c0c4cc"/><path d="M3.9 4.5 C3.9 3.2 4.8 2.5 5.8 2.5 C6.8 2.5 7.6 3.2 7.6 4.1 C7.6 5.2 6 5.4 6 6.9" fill="none" stroke="#fff" stroke-width="1.15"/><rect x="5.35" y="7.9" width="1.3" height="1.3" fill="#fff"/></svg>
<div class="cb on" style="left:565.2px;top:284.2px"><svg class="a" style="left:0;top:0" width="12.6" height="12.6" viewBox="0 0 12.6 12.6"><path d="M2.2 6.6 L4.8 8.9 L10 3.6" fill="none" stroke="#fff" stroke-width="1.3"/></svg></div>
<div class="lb on" style="left:586.7px;top:282.5px">支付订单数</div>
<svg class="a" style="left:654px;top:284.3px" width="11.4" height="11.4" viewBox="0 0 11.4 11.4"><circle cx="5.7" cy="5.7" r="5.7" fill="#409eff"/><path d="M3.9 4.5 C3.9 3.2 4.8 2.5 5.8 2.5 C6.8 2.5 7.6 3.2 7.6 4.1 C7.6 5.2 6 5.4 6 6.9" fill="none" stroke="#fff" stroke-width="1.15"/><rect x="5.35" y="7.9" width="1.3" height="1.3" fill="#fff"/></svg>
<div class="cb" style="left:684px;top:284.2px"></div>
<div class="lb" style="left:705.5px;top:282.5px">GMV</div>
<svg class="a" style="left:738.4px;top:284.3px" width="11.4" height="11.4" viewBox="0 0 11.4 11.4"><circle cx="5.7" cy="5.7" r="5.7" fill="#606266"/><path d="M3.9 4.5 C3.9 3.2 4.8 2.5 5.8 2.5 C6.8 2.5 7.6 3.2 7.6 4.1 C7.6 5.2 6 5.4 6 6.9" fill="none" stroke="#fff" stroke-width="1.15"/><rect x="5.35" y="7.9" width="1.3" height="1.3" fill="#fff"/></svg>
<div class="cb dis" style="left:768.4px;top:284.2px"><svg class="a" style="left:0;top:0" width="12.6" height="12.6" viewBox="0 0 12.6 12.6"><path d="M2.2 6.6 L4.8 8.9 L10 3.6" fill="none" stroke="#c0c4cc" stroke-width="1.1"/></svg></div>
<div class="lb dis" style="left:789.9px;top:282.5px">支付金额</div>
<svg class="a" style="left:843.7px;top:284.3px" width="11.4" height="11.4" viewBox="0 0 11.4 11.4"><circle cx="5.7" cy="5.7" r="5.7" fill="#c0c4cc"/><path d="M3.9 4.5 C3.9 3.2 4.8 2.5 5.8 2.5 C6.8 2.5 7.6 3.2 7.6 4.1 C7.6 5.2 6 5.4 6 6.9" fill="none" stroke="#fff" stroke-width="1.15"/><rect x="5.35" y="7.9" width="1.3" height="1.3" fill="#fff"/></svg>
<div class="cb" style="left:874.4px;top:284.2px"></div>
<div class="lb" style="left:895.9px;top:282.5px">含券支付金额</div>
<svg class="a" style="left:976px;top:284.3px" width="11.4" height="11.4" viewBox="0 0 11.4 11.4"><circle cx="5.7" cy="5.7" r="5.7" fill="#606266"/><path d="M3.9 4.5 C3.9 3.2 4.8 2.5 5.8 2.5 C6.8 2.5 7.6 3.2 7.6 4.1 C7.6 5.2 6 5.4 6 6.9" fill="none" stroke="#fff" stroke-width="1.15"/><rect x="5.35" y="7.9" width="1.3" height="1.3" fill="#fff"/></svg>
<div class="cb on" style="left:1006px;top:284.2px"><svg class="a" style="left:0;top:0" width="12.6" height="12.6" viewBox="0 0 12.6 12.6"><path d="M2.2 6.6 L4.8 8.9 L10 3.6" fill="none" stroke="#fff" stroke-width="1.3"/></svg></div>
<div class="lb on" style="left:1027.5px;top:282.5px">ROI</div>
<svg class="a" style="left:1053.8px;top:284.3px" width="11.4" height="11.4" viewBox="0 0 11.4 11.4"><circle cx="5.7" cy="5.7" r="5.7" fill="#409eff"/><path d="M3.9 4.5 C3.9 3.2 4.8 2.5 5.8 2.5 C6.8 2.5 7.6 3.2 7.6 4.1 C7.6 5.2 6 5.4 6 6.9" fill="none" stroke="#fff" stroke-width="1.15"/><rect x="5.35" y="7.9" width="1.3" height="1.3" fill="#fff"/></svg>
<div class="cb dis" style="left:234px;top:342.2px"><svg class="a" style="left:0;top:0" width="12.6" height="12.6" viewBox="0 0 12.6 12.6"><path d="M2.2 6.6 L4.8 8.9 L10 3.6" fill="none" stroke="#c0c4cc" stroke-width="1.1"/></svg></div>
<div class="lb dis" style="left:255.5px;top:340.5px">退款客户数</div>
<svg class="a" style="left:323px;top:342.3px" width="11.4" height="11.4" viewBox="0 0 11.4 11.4"><circle cx="5.7" cy="5.7" r="5.7" fill="#c0c4cc"/><path d="M3.9 4.5 C3.9 3.2 4.8 2.5 5.8 2.5 C6.8 2.5 7.6 3.2 7.6 4.1 C7.6 5.2 6 5.4 6 6.9" fill="none" stroke="#fff" stroke-width="1.15"/><rect x="5.35" y="7.9" width="1.3" height="1.3" fill="#fff"/></svg>
<div class="cb" style="left:353px;top:342.2px"></div>
<div class="lb" style="left:374.5px;top:340.5px">退款订单数</div>
<svg class="a" style="left:442px;top:342.3px" width="11.4" height="11.4" viewBox="0 0 11.4 11.4"><circle cx="5.7" cy="5.7" r="5.7" fill="#606266"/><path d="M3.9 4.5 C3.9 3.2 4.8 2.5 5.8 2.5 C6.8 2.5 7.6 3.2 7.6 4.1 C7.6 5.2 6 5.4 6 6.9" fill="none" stroke="#fff" stroke-width="1.15"/><rect x="5.35" y="7.9" width="1.3" height="1.3" fill="#fff"/></svg>
<div class="cb dis" style="left:471px;top:342.2px"><svg class="a" style="left:0;top:0" width="12.6" height="12.6" viewBox="0 0 12.6 12.6"><path d="M2.2 6.6 L4.8 8.9 L10 3.6" fill="none" stroke="#c0c4cc" stroke-width="1.1"/></svg></div>
<div class="lb dis" style="left:492.5px;top:340.5px">退款金额</div>
<svg class="a" style="left:548px;top:342.3px" width="11.4" height="11.4" viewBox="0 0 11.4 11.4"><circle cx="5.7" cy="5.7" r="5.7" fill="#c0c4cc"/><path d="M3.9 4.5 C3.9 3.2 4.8 2.5 5.8 2.5 C6.8 2.5 7.6 3.2 7.6 4.1 C7.6 5.2 6 5.4 6 6.9" fill="none" stroke="#fff" stroke-width="1.15"/><rect x="5.35" y="7.9" width="1.3" height="1.3" fill="#fff"/></svg>
<div class="cb on" style="left:234px;top:400.2px"><svg class="a" style="left:0;top:0" width="12.6" height="12.6" viewBox="0 0 12.6 12.6"><path d="M2.2 6.6 L4.8 8.9 L10 3.6" fill="none" stroke="#fff" stroke-width="1.3"/></svg></div>
<div class="lb on" style="left:255.5px;top:398.5px">渠道曝光</div>
<div class="cb on" style="left:324px;top:400.2px"><svg class="a" style="left:0;top:0" width="12.6" height="12.6" viewBox="0 0 12.6 12.6"><path d="M2.2 6.6 L4.8 8.9 L10 3.6" fill="none" stroke="#fff" stroke-width="1.3"/></svg></div>
<div class="lb on" style="left:345.5px;top:398.5px">渠道点击</div>
<div class="cb on" style="left:414px;top:400.2px"><svg class="a" style="left:0;top:0" width="12.6" height="12.6" viewBox="0 0 12.6 12.6"><path d="M2.2 6.6 L4.8 8.9 L10 3.6" fill="none" stroke="#fff" stroke-width="1.3"/></svg></div>
<div class="lb on" style="left:435.5px;top:398.5px">成本</div>
<div class="cb on" style="left:479px;top:400.2px"><svg class="a" style="left:0;top:0" width="12.6" height="12.6" viewBox="0 0 12.6 12.6"><path d="M2.2 6.6 L4.8 8.9 L10 3.6" fill="none" stroke="#fff" stroke-width="1.3"/></svg></div>
<div class="lb on" style="left:500.5px;top:398.5px">领券数</div>
<div class="cb on" style="left:556px;top:400.2px"><svg class="a" style="left:0;top:0" width="12.6" height="12.6" viewBox="0 0 12.6 12.6"><path d="M2.2 6.6 L4.8 8.9 L10 3.6" fill="none" stroke="#fff" stroke-width="1.3"/></svg></div>
<div class="lb on" style="left:577.5px;top:398.5px">佣金比例</div>
<div class="a" style="left:1747px;top:434px;width:93px;height:32px;border-radius:4px;background:#409eff;color:#fff;font-size:12.6px;line-height:32px;text-align:center">导出excel</div>
<div class="a" style="left:225px;top:480px;width:1615px;height:48.5px;background:#f0f2f5"></div>
<div class="a" style="left:234px;top:479px;line-height:49px;font-size:12.6px;font-weight:bold;letter-spacing:-0.4px;color:#909399">渠道名称</div>
<div class="th" style="left:450.1px;width:152.9px"><span style="letter-spacing:-0.4px">浏览量(PV)</span><span style="display:inline-block;width:21.6px;height:12px;position:relative;vertical-align:-1px"><svg style="position:absolute;left:6.3px;top:0" width="9" height="12" viewBox="0 0 9 12"><path d="M4.5 0.3 L8.8 4.8 H0.2 Z M4.5 11.7 L8.8 7.2 H0.2 Z" fill="#c0c4cc"/></svg></span></div>
<div class="th" style="left:603.0px;width:152.9px"><span style="letter-spacing:-0.4px">访客数(UV)</span><span style="display:inline-block;width:21.6px;height:12px;position:relative;vertical-align:-1px"><svg style="position:absolute;left:6.3px;top:0" width="9" height="12" viewBox="0 0 9 12"><path d="M4.5 0.3 L8.8 4.8 H0.2 Z M4.5 11.7 L8.8 7.2 H0.2 Z" fill="#c0c4cc"/></svg></span></div>
<div class="th" style="left:755.9px;width:152.9px"><span style="letter-spacing:-0.4px">下单买家数</span><span style="display:inline-block;width:21.6px;height:12px;position:relative;vertical-align:-1px"><svg style="position:absolute;left:6.3px;top:0" width="9" height="12" viewBox="0 0 9 12"><path d="M4.5 0.3 L8.8 4.8 H0.2 Z M4.5 11.7 L8.8 7.2 H0.2 Z" fill="#c0c4cc"/></svg></span></div>
<div class="th" style="left:908.8px;width:152.9px"><span style="letter-spacing:-0.4px">下单数</span><span style="display:inline-block;width:21.6px;height:12px;position:relative;vertical-align:-1px"><svg style="position:absolute;left:6.3px;top:0" width="9" height="12" viewBox="0 0 9 12"><path d="M4.5 0.3 L8.8 4.8 H0.2 Z M4.5 11.7 L8.8 7.2 H0.2 Z" fill="#c0c4cc"/></svg></span></div>
<div class="th" style="left:1061.7px;width:152.9px"><span style="letter-spacing:-0.4px">支付买家数</span><span style="display:inline-block;width:21.6px;height:12px;position:relative;vertical-align:-1px"><svg style="position:absolute;left:6.3px;top:0" width="9" height="12" viewBox="0 0 9 12"><path d="M4.5 0.3 L8.8 4.8 H0.2 Z M4.5 11.7 L8.8 7.2 H0.2 Z" fill="#c0c4cc"/></svg></span></div>
<div class="th" style="left:1214.6px;width:152.9px"><span style="letter-spacing:-0.4px">支付订单数</span><span style="display:inline-block;width:21.6px;height:12px;position:relative;vertical-align:-1px"><svg style="position:absolute;left:6.3px;top:0" width="9" height="12" viewBox="0 0 9 12"><path d="M4.5 0.3 L8.8 4.8 H0.2 Z M4.5 11.7 L8.8 7.2 H0.2 Z" fill="#c0c4cc"/></svg></span></div>
<div class="th" style="left:1367.5px;width:152.9px"><span style="letter-spacing:-0.4px">支付金额</span><span style="display:inline-block;width:21.6px;height:12px;position:relative;vertical-align:-1px"><svg style="position:absolute;left:6.3px;top:0" width="9" height="12" viewBox="0 0 9 12"><path d="M4.5 0.3 L8.8 4.8 H0.2 Z M4.5 11.7 L8.8 7.2 H0.2 Z" fill="#c0c4cc"/></svg></span></div>
<div class="th" style="left:1520.4px;width:152.9px"><span style="letter-spacing:-0.4px">ROI</span><span style="display:inline-block;width:21.6px;height:12px;position:relative;vertical-align:-1px"><svg style="position:absolute;left:6.3px;top:0" width="9" height="12" viewBox="0 0 9 12"><path d="M4.5 0.3 L8.8 4.8 H0.2 Z M4.5 11.7 L8.8 7.2 H0.2 Z" fill="#c0c4cc"/></svg></span></div>
<div class="th" style="left:1673.3px;width:152.9px"><span style="letter-spacing:-0.4px">退款客户数</span><span style="display:inline-block;width:21.6px;height:12px;position:relative;vertical-align:-1px"><svg style="position:absolute;left:6.3px;top:0" width="9" height="12" viewBox="0 0 9 12"><path d="M4.5 0.3 L8.8 4.8 H0.2 Z M4.5 11.7 L8.8 7.2 H0.2 Z" fill="#c0c4cc"/></svg></span></div>
<div class="a" style="left:450px;top:539px;width:1373px;height:1px;background:#ebeef5"></div>
<div class="a" style="left:225px;top:538px;width:225px;height:1px;background:#ebeef5"></div>
<div class="a" style="left:450px;top:590px;width:1373px;height:1px;background:#ebeef5"></div>
<div class="a" style="left:225px;top:589px;width:225px;height:1px;background:#ebeef5"></div>
<div class="a" style="left:269px;top:554.0px;line-height:20px;font-size:12.6px;color:#606266">1231-fuli</div>
<svg class="a" style="left:253.5px;top:558.9px" width="7" height="9" viewBox="0 0 7 9"><path d="M1 0.8 L5 4.5 L1 8.2" fill="none" stroke="#606266" stroke-width="1.1"/></svg>
<div class="td" style="left:450.1px;width:152.9px;top:554.0px;line-height:20px">9</div>
<div class="td" style="left:603.0px;width:152.9px;top:554.0px;line-height:20px">1</div>
<div class="td" style="left:755.9px;width:152.9px;top:554.0px;line-height:20px">1</div>
<div class="td" style="left:908.8px;width:152.9px;top:554.0px;line-height:20px">1</div>
<div class="td" style="left:1061.7px;width:152.9px;top:554.0px;line-height:20px">1</div>
<div class="td" style="left:1214.6px;width:152.9px;top:554.0px;line-height:20px">1</div>
<div class="td" style="left:1367.5px;width:152.9px;top:554.0px;line-height:20px">59</div>
<div class="td" style="left:1520.4px;width:152.9px;top:554.0px;line-height:20px">-</div>
<div class="td" style="left:1673.3px;width:152.9px;top:554.0px;line-height:20px">0</div>
<div class="a" style="left:450px;top:649px;width:1373px;height:1px;background:#ebeef5"></div>
<div class="a" style="left:225px;top:648px;width:225px;height:1px;background:#ebeef5"></div>
<div class="a" style="left:269px;top:599.0px;line-height:20px;font-size:12.6px;color:#606266;white-space:normal">1206-1215_gongzhonghao_88<br><span style="position:relative;left:-35px">-50</span></div>
<svg class="a" style="left:253.5px;top:603.9px" width="7" height="9" viewBox="0 0 7 9"><path d="M1 0.8 L5 4.5 L1 8.2" fill="none" stroke="#606266" stroke-width="1.1"/></svg>
<div class="td" style="left:450.1px;width:152.9px;top:609.0px;line-height:20px">54</div>
<div class="td" style="left:603.0px;width:152.9px;top:609.0px;line-height:20px">16</div>
<div class="td" style="left:755.9px;width:152.9px;top:609.0px;line-height:20px">3</div>
<div class="td" style="left:908.8px;width:152.9px;top:609.0px;line-height:20px">6</div>
<div class="td" style="left:1061.7px;width:152.9px;top:609.0px;line-height:20px">3</div>
<div class="td" style="left:1214.6px;width:152.9px;top:609.0px;line-height:20px">4</div>
<div class="td" style="left:1367.5px;width:152.9px;top:609.0px;line-height:20px">363.95</div>
<div class="td" style="left:1520.4px;width:152.9px;top:609.0px;line-height:20px">-</div>
<div class="td" style="left:1673.3px;width:152.9px;top:609.0px;line-height:20px">0</div>
<div class="a" style="left:450px;top:700px;width:1373px;height:1px;background:#ebeef5"></div>
<div class="a" style="left:225px;top:699px;width:225px;height:1px;background:#ebeef5"></div>
<div class="a" style="left:269px;top:664.0px;line-height:20px;font-size:12.6px;color:#606266">02GZHF001119121300</div>
<svg class="a" style="left:253.5px;top:668.9px" width="7" height="9" viewBox="0 0 7 9"><path d="M1 0.8 L5 4.5 L1 8.2" fill="none" stroke="#606266" stroke-width="1.1"/></svg>
<div class="td" style="left:450.1px;width:152.9px;top:664.0px;line-height:20px">1567</div>
<div class="td" style="left:603.0px;width:152.9px;top:664.0px;line-height:20px">212</div>
<div class="td" style="left:755.9px;width:152.9px;top:664.0px;line-height:20px">21</div>
<div class="td" style="left:908.8px;width:152.9px;top:664.0px;line-height:20px">29</div>
<div class="td" style="left:1061.7px;width:152.9px;top:664.0px;line-height:20px">15</div>
<div class="td" style="left:1214.6px;width:152.9px;top:664.0px;line-height:20px">20</div>
<div class="td" style="left:1367.5px;width:152.9px;top:664.0px;line-height:20px">1654.7</div>
<div class="td" style="left:1520.4px;width:152.9px;top:664.0px;line-height:20px">-</div>
<div class="td" style="left:1673.3px;width:152.9px;top:664.0px;line-height:20px">0</div>
<div class="a" style="left:450px;top:751px;width:1373px;height:1px;background:#ebeef5"></div>
<div class="a" style="left:225px;top:750px;width:225px;height:1px;background:#ebeef5"></div>
<div class="a" style="left:269px;top:715.0px;line-height:20px;font-size:12.6px;color:#606266">02WXTW002319122600</div>
<svg class="a" style="left:253.5px;top:719.9px" width="7" height="9" viewBox="0 0 7 9"><path d="M1 0.8 L5 4.5 L1 8.2" fill="none" stroke="#606266" stroke-width="1.1"/></svg>
<div class="td" style="left:450.1px;width:152.9px;top:715.0px;line-height:20px">714</div>
<div class="td" style="left:603.0px;width:152.9px;top:715.0px;line-height:20px">52</div>
<div class="td" style="left:755.9px;width:152.9px;top:715.0px;line-height:20px">9</div>
<div class="td" style="left:908.8px;width:152.9px;top:715.0px;line-height:20px">13</div>
<div class="td" style="left:1061.7px;width:152.9px;top:715.0px;line-height:20px">5</div>
<div class="td" style="left:1214.6px;width:152.9px;top:715.0px;line-height:20px">9</div>
<div class="td" style="left:1367.5px;width:152.9px;top:715.0px;line-height:20px">841</div>
<div class="td" style="left:1520.4px;width:152.9px;top:715.0px;line-height:20px">-</div>
<div class="td" style="left:1673.3px;width:152.9px;top:715.0px;line-height:20px">0</div>
<div class="a" style="left:450px;top:802px;width:1373px;height:1px;background:#ebeef5"></div>
<div class="a" style="left:225px;top:801px;width:225px;height:1px;background:#ebeef5"></div>
<div class="a" style="left:269px;top:766.0px;line-height:20px;font-size:12.6px;color:#606266">02WXTW002119122300</div>
<svg class="a" style="left:253.5px;top:770.9px" width="7" height="9" viewBox="0 0 7 9"><path d="M1 0.8 L5 4.5 L1 8.2" fill="none" stroke="#606266" stroke-width="1.1"/></svg>
<div class="td" style="left:450.1px;width:152.9px;top:766.0px;line-height:20px">1564</div>
<div class="td" style="left:603.0px;width:152.9px;top:766.0px;line-height:20px">259</div>
<div class="td" style="left:755.9px;width:152.9px;top:766.0px;line-height:20px">9</div>
<div class="td" style="left:908.8px;width:152.9px;top:766.0px;line-height:20px">13</div>
<div class="td" style="left:1061.7px;width:152.9px;top:766.0px;line-height:20px">8</div>
<div class="td" style="left:1214.6px;width:152.9px;top:766.0px;line-height:20px">11</div>
<div class="td" style="left:1367.5px;width:152.9px;top:766.0px;line-height:20px">733.12</div>
<div class="td" style="left:1520.4px;width:152.9px;top:766.0px;line-height:20px">-</div>
<div class="td" style="left:1673.3px;width:152.9px;top:766.0px;line-height:20px">0</div>
<div class="a" style="left:450px;top:853px;width:1373px;height:1px;background:#ebeef5"></div>
<div class="a" style="left:225px;top:852px;width:225px;height:1px;background:#ebeef5"></div>
<div class="a" style="left:269px;top:817.0px;line-height:20px;font-size:12.6px;color:#606266">02CJHH003019122600</div>
<svg class="a" style="left:253.5px;top:821.9px" width="7" height="9" viewBox="0 0 7 9"><path d="M1 0.8 L5 4.5 L1 8.2" fill="none" stroke="#606266" stroke-width="1.1"/></svg>
<div class="td" style="left:450.1px;width:152.9px;top:817.0px;line-height:20px">24</div>
<div class="td" style="left:603.0px;width:152.9px;top:817.0px;line-height:20px">2</div>
<div class="td" style="left:755.9px;width:152.9px;top:817.0px;line-height:20px">0</div>
<div class="td" style="left:908.8px;width:152.9px;top:817.0px;line-height:20px">0</div>
<div class="td" style="left:1061.7px;width:152.9px;top:817.0px;line-height:20px">0</div>
<div class="td" style="left:1214.6px;width:152.9px;top:817.0px;line-height:20px">0</div>
<div class="td" style="left:1367.5px;width:152.9px;top:817.0px;line-height:20px">0</div>
<div class="td" style="left:1520.4px;width:152.9px;top:817.0px;line-height:20px">-</div>
<div class="td" style="left:1673.3px;width:152.9px;top:817.0px;line-height:20px">0</div>
<div class="a" style="left:450px;top:904px;width:1373px;height:1px;background:#ebeef5"></div>
<div class="a" style="left:225px;top:903px;width:225px;height:1px;background:#ebeef5"></div>
<div class="a" style="left:269px;top:868.0px;line-height:20px;font-size:12.6px;color:#606266">11.5</div>
<svg class="a" style="left:253.5px;top:872.9px" width="7" height="9" viewBox="0 0 7 9"><path d="M1 0.8 L5 4.5 L1 8.2" fill="none" stroke="#606266" stroke-width="1.1"/></svg>
<div class="td" style="left:450.1px;width:152.9px;top:868.0px;line-height:20px">88</div>
<div class="td" style="left:603.0px;width:152.9px;top:868.0px;line-height:20px">2</div>
<div class="td" style="left:755.9px;width:152.9px;top:868.0px;line-height:20px">5</div>
<div class="td" style="left:908.8px;width:152.9px;top:868.0px;line-height:20px">14</div>
<div class="td" style="left:1061.7px;width:152.9px;top:868.0px;line-height:20px">4</div>
<div class="td" style="left:1214.6px;width:152.9px;top:868.0px;line-height:20px">8</div>
<div class="td" style="left:1367.5px;width:152.9px;top:868.0px;line-height:20px">519.04</div>
<div class="td" style="left:1520.4px;width:152.9px;top:868.0px;line-height:20px">-</div>
<div class="td" style="left:1673.3px;width:152.9px;top:868.0px;line-height:20px">0</div>
<div class="a" style="left:450px;top:955px;width:1373px;height:1px;background:#ebeef5"></div>
<div class="a" style="left:225px;top:954px;width:225px;height:1px;background:#ebeef5"></div>
<div class="a" style="left:269px;top:919.0px;line-height:20px;font-size:12.6px;color:#606266">20191125</div>
<svg class="a" style="left:253.5px;top:923.9px" width="7" height="9" viewBox="0 0 7 9"><path d="M1 0.8 L5 4.5 L1 8.2" fill="none" stroke="#606266" stroke-width="1.1"/></svg>
<div class="td" style="left:450.1px;width:152.9px;top:919.0px;line-height:20px">34</div>
<div class="td" style="left:603.0px;width:152.9px;top:919.0px;line-height:20px">3</div>
<div class="td" style="left:755.9px;width:152.9px;top:919.0px;line-height:20px">0</div>
<div class="td" style="left:908.8px;width:152.9px;top:919.0px;line-height:20px">0</div>
<div class="td" style="left:1061.7px;width:152.9px;top:919.0px;line-height:20px">0</div>
<div class="td" style="left:1214.6px;width:152.9px;top:919.0px;line-height:20px">0</div>
<div class="td" style="left:1367.5px;width:152.9px;top:919.0px;line-height:20px">0</div>
<div class="td" style="left:1520.4px;width:152.9px;top:919.0px;line-height:20px">-</div>
<div class="td" style="left:1673.3px;width:152.9px;top:919.0px;line-height:20px">0</div>
<div class="a" style="left:227.3px;top:545px;width:1563.4px;height:40.7px;border:2px solid #ff8a8a;border-radius:2px"></div>
<div class="a" style="left:1823px;top:529px;width:17px;height:427px;background:#f1f1f1"></div>
<svg class="a" style="left:1827px;top:535px" width="9" height="6" viewBox="0 0 9 6"><path d="M4.5 0.5 L8.5 5 H0.5 Z" fill="#505050"/></svg>
<div class="a" style="left:1825px;top:692px;width:13px;height:89px;background:#c1c1c1"></div>
</body></html>
